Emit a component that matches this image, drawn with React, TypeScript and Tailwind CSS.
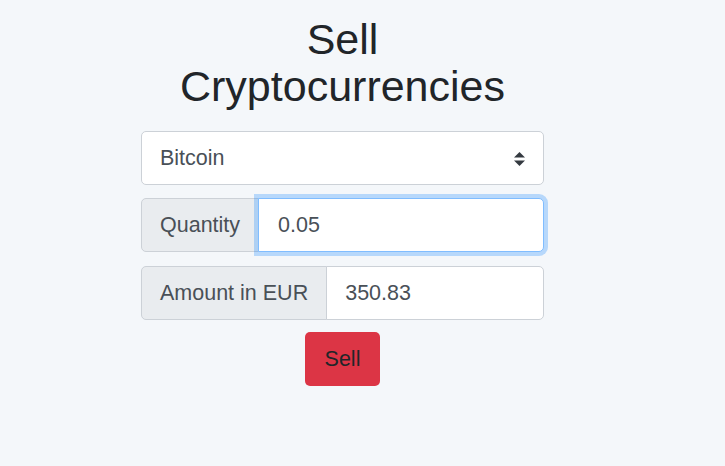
import { useState } from 'react';

const App = () => {
  const [coin, setCoin] = useState('Bitcoin');
  const [quantity, setQuantity] = useState('0.05');
  const amount = '350.83';

  return (
    <div className="min-h-screen bg-[#f4f7fa] font-['Liberation_Sans',Arial,sans-serif] text-[#212529]">
      <div className="ml-[141px] w-[403px] pt-[16px] flex flex-col items-center">
        <h1 className="text-[43px] leading-[47px] text-center font-normal">
          Sell
          <br />
          Cryptocurrencies
        </h1>

        <form onSubmit={(e) => e.preventDefault()} className="w-full mt-[21px] flex flex-col">
          {/* coin picker */}
          <div className="relative h-[54px]">
            <select
              value={coin}
              onChange={(e) => setCoin(e.target.value)}
              className="appearance-none w-full h-full bg-white border border-[#ccd1d7] rounded-[5px] pl-[18px] pr-10 text-[21.5px] text-[#495057] outline-none"
            >
              <option>Bitcoin</option>
              <option>Ethereum</option>
              <option>Litecoin</option>
            </select>
            <svg
              className="absolute right-[19px] top-[21px] pointer-events-none"
              width="11"
              height="14"
              viewBox="0 0 11 14"
            >
              <path d="M5.5 0 L11 5.5 H0 Z" fill="#343a40" />
              <path d="M0 8.5 H11 L5.5 14 Z" fill="#343a40" />
            </svg>
          </div>

          {/* quantity */}
          <div className="flex h-[54px] mt-[13px]">
            <span className="flex items-center px-[18px] bg-[#e9ecef] border border-[#ccd1d7] rounded-l-[5px] text-[21.5px] text-[#495057]">
              Quantity
            </span>
            <input
              type="text"
              value={quantity}
              onChange={(e) => setQuantity(e.target.value)}
              className="flex-1 min-w-0 -ml-px bg-white border border-[#80bdff] rounded-r-[5px] px-[19px] text-[21.5px] text-[#495057] outline-none shadow-[0_0_0_4px_rgba(0,123,255,0.25)]"
            />
          </div>

          {/* amount */}
          <div className="flex h-[54px] mt-[14px]">
            <span className="flex items-center px-[18px] bg-[#e9ecef] border border-[#ccd1d7] rounded-l-[5px] text-[21.5px] text-[#495057]">
              Amount in EUR
            </span>
            <input
              type="text"
              readOnly
              value={amount}
              className="flex-1 min-w-0 -ml-px bg-white border border-[#ccd1d7] rounded-r-[5px] px-[18px] text-[21.5px] text-[#495057] outline-none"
            />
          </div>

          <div className="flex justify-center mt-[12px]">
            <button
              type="submit"
              className="h-[54px] w-[75px] bg-[#dc3545] rounded-[5px] text-[21.5px] text-[#212529]"
            >
              Sell
            </button>
          </div>
        </form>
      </div>
    </div>
  );
};

export default App;
